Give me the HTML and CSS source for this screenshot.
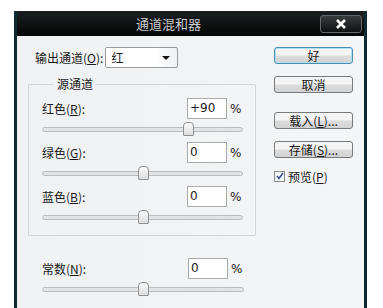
FILE: index.html
```html
<!DOCTYPE html>
<html lang="zh-CN">
<head>
    <meta charset="UTF-8">
    <title>通道混和器</title>
    <link rel="stylesheet" href="styles.css">
</head>
<body>
    <div class="window">
        <div class="titlebar">
            <div class="title">通道混和器</div>
            <div class="close">
                <svg width="12" height="10" viewBox="0 0 12 10"><path d="M2 1 L10 9 M10 1 L2 9" stroke="#fff" stroke-width="2.6"/></svg>
            </div>
        </div>

        <div class="content">
            <div class="main">
                <div class="output-row">
                    <span class="label">输出通道(<u>O</u>):</span>
                    <div class="select">
                        <span>红</span>
                        <span class="arrow"></span>
                    </div>
                </div>

                <fieldset class="group">
                    <legend>源通道</legend>

                    <div class="channel">
                        <div class="field-row">
                            <span class="label">红色(<u>R</u>):</span>
                            <span class="value">+90</span>
                            <span class="pct">%</span>
                        </div>
                        <div class="slider"><span class="thumb" style="left: 72.5%"></span></div>
                    </div>

                    <div class="channel">
                        <div class="field-row">
                            <span class="label">绿色(<u>G</u>):</span>
                            <span class="value">0</span>
                            <span class="pct">%</span>
                        </div>
                        <div class="slider"><span class="thumb" style="left: 50%"></span></div>
                    </div>

                    <div class="channel">
                        <div class="field-row">
                            <span class="label">蓝色(<u>B</u>):</span>
                            <span class="value">0</span>
                            <span class="pct">%</span>
                        </div>
                        <div class="slider"><span class="thumb" style="left: 50%"></span></div>
                    </div>
                </fieldset>

                <div class="constant channel">
                    <div class="field-row">
                        <span class="label">常数(<u>N</u>):</span>
                        <span class="value">0</span>
                        <span class="pct">%</span>
                    </div>
                    <div class="slider"><span class="thumb" style="left: 50%"></span></div>
                </div>
            </div>

            <div class="side">
                <button class="btn default">好</button>
                <button class="btn">取消</button>
                <button class="btn gap">载入(<u>L</u>)...</button>
                <button class="btn">存储(<u>S</u>)...</button>
                <label class="preview">
                    <span class="check">
                        <svg width="8" height="8" viewBox="0 0 8 8"><path d="M1 4 L3 6.5 L7 1" stroke="#3a4f8c" stroke-width="1.6" fill="none"/></svg>
                    </span>
                    预览(<u>P</u>)
                </label>
            </div>
        </div>
    </div>
</body>
</html>
```

FILE: styles.css
```css
body {
    margin: 0;
    background-color: #fff;
    font-family: "Noto Sans CJK SC", "DejaVu Sans", sans-serif;
    font-size: 12px;
    color: #1a1a1a;
}

.window {
    margin: 11px 0 0 14px;
    width: 347px;
    height: 297px;
    overflow: hidden;
    border-left: 3px solid #0f2a33;
    border-right: 3px solid #0f2a33;
    background: linear-gradient(to right, #f0f1f3, #f4f5f7);
}

.titlebar {
    display: flex;
    align-items: center;
    height: 25px;
    background: linear-gradient(#1c1f20, #050606);
}

.title {
    flex: 1;
    text-align: center;
    color: #c9cacb;
    font-size: 13px;
}

.close {
    display: flex;
    align-items: center;
    justify-content: center;
    width: 40px;
    height: 16px;
    margin-right: 2px;
    border: 1px solid #62676a;
    border-radius: 3px;
    background: linear-gradient(#383b3c, #0e1011);
}

.content {
    display: flex;
    padding: 11px 11px 0 11px;
}

.main {
    width: 228px;
}

.output-row {
    display: flex;
    align-items: center;
    margin-left: 7px;
}

.select {
    display: flex;
    align-items: center;
    justify-content: space-between;
    width: 73px;
    height: 21px;
    margin-left: 2px;
    padding: 0 0 0 5px;
    box-sizing: border-box;
    border: 1px solid #9a9a9a;
    border-radius: 2px;
    background: linear-gradient(to right, #fff 70%, #eef0f3);
}

.arrow {
    width: 0;
    height: 0;
    margin-right: 7px;
    border-left: 4px solid transparent;
    border-right: 4px solid transparent;
    border-top: 4px solid #111;
}

.group {
    margin: 8px 0 0 0;
    padding: 6px 12px 12px 13px;
    border: 1px solid #d3d4d6;
    border-radius: 2px;
}

.group legend {
    padding: 0 3px;
    margin-left: 12px;
    line-height: 16px;
}

.channel {
    margin-bottom: 7px;
}

.group .channel:last-child {
    margin-bottom: 0;
}

.field-row {
    display: flex;
    align-items: center;
    height: 21px;
}

.field-row .label {
    flex: 1;
}

.value {
    width: 36px;
    height: 19px;
    line-height: 19px;
    padding-left: 2px;
    border: 1px solid #a9abad;
    background-color: #fff;
    font-family: "DejaVu Sans", sans-serif;
    font-size: 12px;
}

.pct {
    width: 13px;
    margin-left: 3px;
    font-family: "DejaVu Sans", sans-serif;
}

.slider {
    position: relative;
    height: 13px;
    margin-top: 3px;
}

.slider::before {
    content: "";
    position: absolute;
    left: 0;
    right: 0;
    top: 5px;
    height: 3px;
    border: 1px solid #b9bbbd;
    border-radius: 3px;
    background-color: #e2e3e5;
}

.thumb {
    position: absolute;
    top: 0;
    width: 9px;
    height: 12px;
    margin-left: -5px;
    border: 1px solid #8f9193;
    border-radius: 4px 4px 1px 1px;
    background: linear-gradient(#fbfbfb, #dcdcdc);
}

.constant {
    margin: 22px 0 0 14px;
    padding-right: 12px;
}

.side {
    display: flex;
    flex-direction: column;
    width: 79px;
    margin-left: 18px;
}

.btn {
    height: 17px;
    padding: 0;
    margin-bottom: 12px;
    border: 1px solid #767a7d;
    border-radius: 3px;
    background: linear-gradient(#f4f4f4 45%, #dcdcdc 55%, #d2d2d2);
    font-family: "Noto Sans CJK SC", "DejaVu Sans", sans-serif;
    font-size: 12px;
    line-height: 15px;
    color: #1a1a1a;
}

.btn.default {
    border-color: #4f8fb3;
    box-shadow: inset 0 0 0 1px #aee0f5;
}

.btn.gap {
    margin-top: 7px;
}

.preview {
    display: flex;
    align-items: center;
    height: 14px;
    margin-top: -1px;
}

.check {
    display: flex;
    align-items: center;
    justify-content: center;
    width: 9px;
    height: 9px;
    margin-right: 3px;
    border: 1px solid #8a8d90;
    background-color: #f4f5f7;
}
```
